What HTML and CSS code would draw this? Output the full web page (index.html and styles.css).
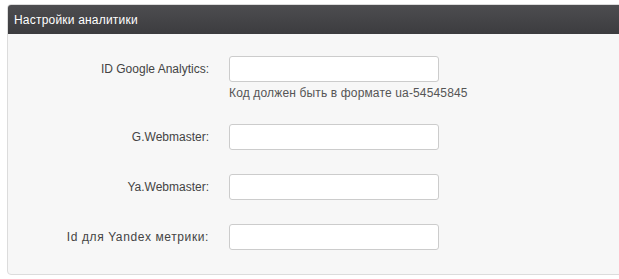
FILE: index.html
```html
<!DOCTYPE html>
<html lang="ru">
<head>
  <meta charset="UTF-8" />
  <title>Настройки аналитики</title>
  <link rel="stylesheet" href="styles.css">
</head>
<body>

  <!-- Analytics settings panel -->
  <div class="panel">
    <div class="panel-head">Настройки аналитики</div>

    <form class="panel-body">
      <div class="row">
        <label class="row-label" for="ga-id">ID Google Analytics:</label>
        <div class="row-control">
          <input type="text" id="ga-id" />
          <p class="hint">Код должен быть в формате ua-54545845</p>
        </div>
      </div>

      <div class="row">
        <label class="row-label" for="g-webmaster">G.Webmaster:</label>
        <div class="row-control">
          <input type="text" id="g-webmaster" />
        </div>
      </div>

      <div class="row">
        <label class="row-label" for="ya-webmaster">Ya.Webmaster:</label>
        <div class="row-control">
          <input type="text" id="ya-webmaster" />
        </div>
      </div>

      <div class="row">
        <label class="row-label wide" for="ya-metrika">Id для Yandex метрики:</label>
        <div class="row-control">
          <input type="text" id="ya-metrika" />
        </div>
      </div>
    </form>
  </div>

</body>
</html>
```

FILE: styles.css
```css
/* Basic Reset */
* {
  margin: 0;
  padding: 0;
  box-sizing: border-box;
}

body {
  font-family: 'Liberation Sans', Arial, sans-serif;
  font-size: 12px;
  color: #333;
  background: #fff;
  overflow: hidden;
}

/* Panel */
.panel {
  margin: 4px -20px 0 7px;
  background: #f7f7f7;
  border: 1px solid #dcdcdc;
  border-radius: 4px;
}

.panel-head {
  height: 29px;
  padding: 0 6px;
  display: flex;
  align-items: center;
  background: linear-gradient(#4d4d50, #3c3c3f);
  color: #fff;
  font-size: 12px;
  letter-spacing: 0.2px;
  border-radius: 3px 3px 0 0;
}

.panel-body {
  padding-top: 22px;
}

/* Form rows */
.row {
  display: flex;
  align-items: flex-start;
  margin-bottom: 24px;
}

.row-label {
  width: 201px;
  flex-shrink: 0;
  text-align: right;
  line-height: 26px;
  color: #444;
}

.row-label.wide {
  letter-spacing: 0.6px;
}

.row-control {
  margin-left: 20px;
}

.row-control input {
  display: block;
  width: 210px;
  height: 26px;
  padding: 3px 6px;
  border: 1px solid #ccc;
  border-radius: 3px;
  background: #fff;
  font: inherit;
}

.hint {
  margin-top: 4px;
  line-height: 14px;
  font-size: 12px;
  letter-spacing: 0.15px;
  color: #555;
}
```
